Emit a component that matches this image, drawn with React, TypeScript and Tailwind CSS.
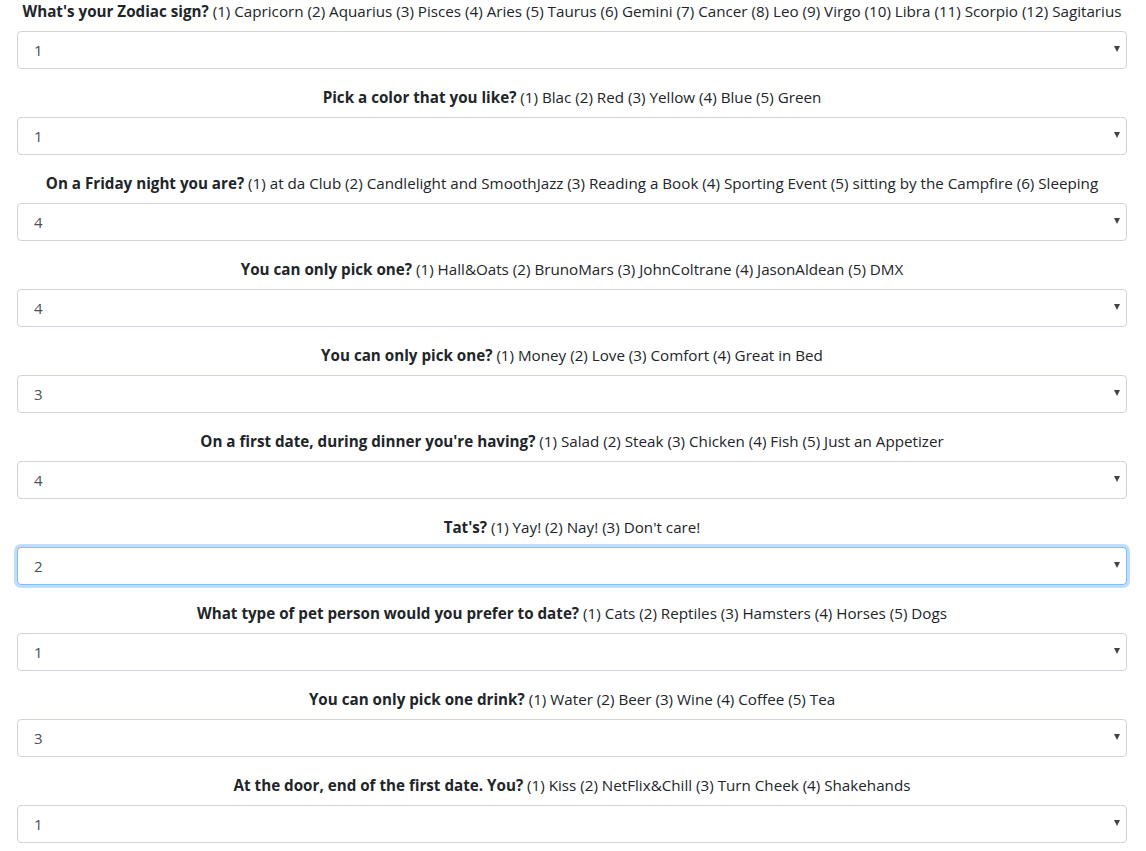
import React from 'react';

type Question = {
  title: string;
  options: string;
  value: string;
  focused?: boolean;
};

const questions: Question[] = [
  {
    title: "What's your Zodiac sign?",
    options:
      '(1) Capricorn (2) Aquarius (3) Pisces (4) Aries (5) Taurus (6) Gemini (7) Cancer (8) Leo (9) Virgo (10) Libra (11) Scorpio (12) Sagitarius',
    value: '1',
  },
  { title: 'Pick a color that you like?', options: '(1) Blac (2) Red (3) Yellow (4) Blue (5) Green', value: '1' },
  {
    title: 'On a Friday night you are?',
    options:
      '(1) at da Club (2) Candlelight and SmoothJazz (3) Reading a Book (4) Sporting Event (5) sitting by the Campfire (6) Sleeping',
    value: '4',
  },
  {
    title: 'You can only pick one?',
    options: '(1) Hall&Oats (2) BrunoMars (3) JohnColtrane (4) JasonAldean (5) DMX',
    value: '4',
  },
  { title: 'You can only pick one?', options: '(1) Money (2) Love (3) Comfort (4) Great in Bed', value: '3' },
  {
    title: "On a first date, during dinner you're having?",
    options: '(1) Salad (2) Steak (3) Chicken (4) Fish (5) Just an Appetizer',
    value: '4',
  },
  { title: "Tat's?", options: "(1) Yay! (2) Nay! (3) Don't care!", value: '2', focused: true },
  {
    title: 'What type of pet person would you prefer to date?',
    options: '(1) Cats (2) Reptiles (3) Hamsters (4) Horses (5) Dogs',
    value: '1',
  },
  {
    title: 'You can only pick one drink?',
    options: '(1) Water (2) Beer (3) Wine (4) Coffee (5) Tea',
    value: '3',
  },
  {
    title: 'At the door, end of the first date. You?',
    options: '(1) Kiss (2) NetFlix&Chill (3) Turn Cheek (4) Shakehands',
    value: '1',
  },
];

function QuestionGroup({ q, idx }: { q: Question; idx: number }) {
  const count = (q.options.match(/\(\d+\)/g) || []).length;
  return (
    <div className="mb-4">
      <label className="block text-center mb-2 leading-6 text-[15.2px] whitespace-nowrap text-[#212529]">
        <span className="font-bold">{q.title}</span> {q.options}
      </label>
      <div className="relative">
        <select
          defaultValue={q.value}
          name={`q${idx}`}
          className={
            'block w-full h-[38px] appearance-none rounded bg-white pl-[16px] pr-8 text-[15px] text-[#495057] outline-none ' +
            (q.focused
              ? 'border border-[#80bdff] shadow-[0_0_0_3px_rgba(0,123,255,0.25)]'
              : 'border border-[#ced4da]')
          }
        >
          {Array.from({ length: count }, (_, i) => (
            <option key={i} value={String(i + 1)}>
              {i + 1}
            </option>
          ))}
        </select>
        <span className="pointer-events-none absolute right-[7px] top-[15px] h-0 w-0 border-x-[3.5px] border-t-[6px] border-x-transparent border-t-[#444]" />
      </div>
    </div>
  );
}

export default function App() {
  return (
    <div className="min-h-screen bg-white font-['Open_Sans',sans-serif]">
      <div className="w-[1110px] ml-[17px] -mt-px">
        {questions.map((q, i) => (
          <QuestionGroup key={i} q={q} idx={i} />
        ))}
      </div>
    </div>
  );
}
